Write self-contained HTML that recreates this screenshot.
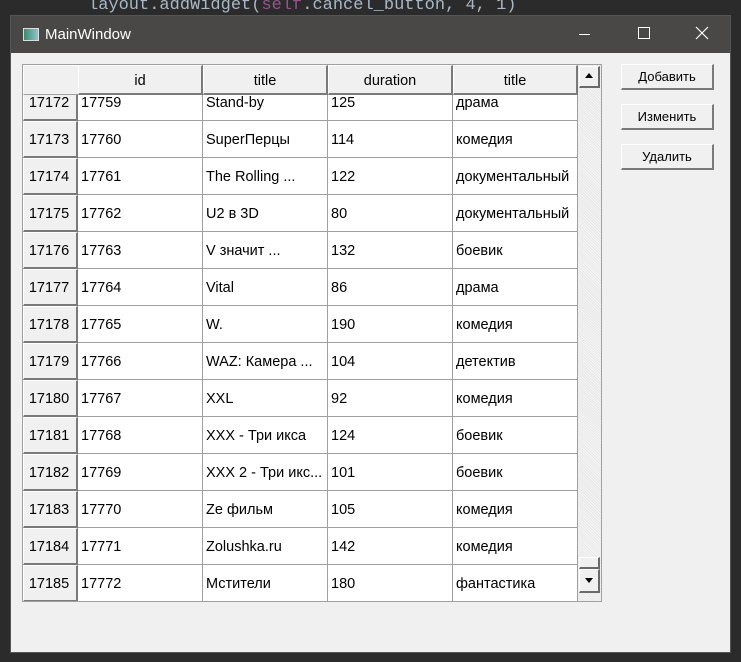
<!DOCTYPE html>
<html><head><meta charset="utf-8"><style>
*{margin:0;padding:0;box-sizing:border-box}
body{width:741px;height:662px;background:#2b2b2b;position:relative;overflow:hidden;font-family:"Liberation Sans","DejaVu Sans",sans-serif;font-size:14.5px;color:#000}
.code{position:absolute;left:88px;top:-4px;font-family:"Liberation Mono",monospace;font-size:17px;color:#a9b7c6;white-space:pre}
.win{position:absolute;left:10px;top:15px;width:721px;height:638px;background:#f0f0f0;border:1px solid #555}
.tb{position:absolute;left:0;top:0;width:100%;height:37px;background:#4a4846;color:#fff;font-size:15px}
.tb .t{position:absolute;left:34px;top:10px}
.tb .ic{position:absolute;left:12px;top:12px;width:16px;height:13px;background:linear-gradient(90deg,#3c8a6a,#8ec4d0);border:1px solid #ddd}
.a{position:absolute}
.tbl{position:absolute;left:11px;top:48px;width:580px;height:538px;background:#fff;border:1px solid #a0a0a0}
.hd{position:absolute;top:0;height:30px;background:#f0f0f0;border-top:1px solid #fff;border-left:1px solid #fff;border-right:2px solid #7a7a7a;border-bottom:2px solid #7a7a7a;text-align:center;line-height:30px}
.body{position:absolute;left:0;top:30px;width:555px;height:506px;overflow:hidden}
.row{position:absolute;left:0;height:37px;width:555px}
.vh{position:absolute;left:0;top:0;width:55px;height:37px;background:#f0f0f0;border-top:1px solid #fff;border-left:1px solid #fff;border-right:2px solid #7a7a7a;border-bottom:2px solid #7a7a7a;text-align:center;line-height:37px;padding-right:2px}
.c{position:absolute;top:0;height:37px;border-right:1px solid #a0a0a0;border-bottom:1px solid #a0a0a0;padding-left:3px;line-height:38px;white-space:nowrap;overflow:hidden}
.sb{position:absolute;left:555px;top:0;width:23px;height:536px;background:repeating-linear-gradient(45deg,#e8e8e8 0 1px,#f4f4f4 1px 2px)}
.sbb{position:absolute;left:1px;width:21px;height:22px;background:#f0f0f0;border-top:1px solid #fff;border-left:1px solid #fff;border-right:2px solid #6a6a6a;border-bottom:2px solid #6a6a6a}
.btn{position:absolute;left:610px;width:93px;height:26px;background:#f0f0f0;border-top:1px solid #fff;border-left:1px solid #fff;border-right:2px solid #7a7a7a;border-bottom:2px solid #7a7a7a;text-align:center;line-height:23px;font-size:13px}
</style></head><body>
<div class="code">layout.addWidget(<span style="color:#94558d">self</span>.cancel_button, 4, 1)</div>
<div class="win">
 <div class="tb"><div class="ic"></div><div class="t">MainWindow</div>
  <div class="a" style="left:568px;top:18px;width:11px;height:1px;background:#fff"></div>
  <div class="a" style="left:627px;top:11px;width:12px;height:12px;border:1px solid #fff"></div>
  <svg class="a" style="left:684px;top:10px" width="14" height="14"><path d="M1 1L13 13M13 1L1 13" stroke="#fff" stroke-width="1.2"/></svg>
 </div>
 <div class="tbl">
  <div class="hd" style="left:0;width:56px;border-right:1px solid #a0a0a0;border-bottom:1px solid #a0a0a0;background:#f0f0f0"></div>
  <div class="hd" style="left:55px;width:125px">id</div>
  <div class="hd" style="left:180px;width:125px">title</div>
  <div class="hd" style="left:305px;width:125px">duration</div>
  <div class="hd" style="left:430px;width:125px">title</div>
  <div class="body">
   <div class="row" style="top:-11px"><div class="vh">17172</div><div class="c" style="left:55px;width:125px">17759</div><div class="c" style="left:180px;width:125px">Stand-by</div><div class="c" style="left:305px;width:125px">125</div><div class="c" style="left:430px;width:125px">драма</div></div>
   <div class="row" style="top:26px"><div class="vh">17173</div><div class="c" style="left:55px;width:125px">17760</div><div class="c" style="left:180px;width:125px">SuperПерцы</div><div class="c" style="left:305px;width:125px">114</div><div class="c" style="left:430px;width:125px">комедия</div></div>
   <div class="row" style="top:63px"><div class="vh">17174</div><div class="c" style="left:55px;width:125px">17761</div><div class="c" style="left:180px;width:125px">The Rolling ...</div><div class="c" style="left:305px;width:125px">122</div><div class="c" style="left:430px;width:125px">документальный</div></div>
   <div class="row" style="top:100px"><div class="vh">17175</div><div class="c" style="left:55px;width:125px">17762</div><div class="c" style="left:180px;width:125px">U2 в 3D</div><div class="c" style="left:305px;width:125px">80</div><div class="c" style="left:430px;width:125px">документальный</div></div>
   <div class="row" style="top:137px"><div class="vh">17176</div><div class="c" style="left:55px;width:125px">17763</div><div class="c" style="left:180px;width:125px">V значит ...</div><div class="c" style="left:305px;width:125px">132</div><div class="c" style="left:430px;width:125px">боевик</div></div>
   <div class="row" style="top:174px"><div class="vh">17177</div><div class="c" style="left:55px;width:125px">17764</div><div class="c" style="left:180px;width:125px">Vital</div><div class="c" style="left:305px;width:125px">86</div><div class="c" style="left:430px;width:125px">драма</div></div>
   <div class="row" style="top:211px"><div class="vh">17178</div><div class="c" style="left:55px;width:125px">17765</div><div class="c" style="left:180px;width:125px">W.</div><div class="c" style="left:305px;width:125px">190</div><div class="c" style="left:430px;width:125px">комедия</div></div>
   <div class="row" style="top:248px"><div class="vh">17179</div><div class="c" style="left:55px;width:125px">17766</div><div class="c" style="left:180px;width:125px">WAZ: Камера ...</div><div class="c" style="left:305px;width:125px">104</div><div class="c" style="left:430px;width:125px">детектив</div></div>
   <div class="row" style="top:285px"><div class="vh">17180</div><div class="c" style="left:55px;width:125px">17767</div><div class="c" style="left:180px;width:125px">XXL</div><div class="c" style="left:305px;width:125px">92</div><div class="c" style="left:430px;width:125px">комедия</div></div>
   <div class="row" style="top:322px"><div class="vh">17181</div><div class="c" style="left:55px;width:125px">17768</div><div class="c" style="left:180px;width:125px">XXX - Три икса</div><div class="c" style="left:305px;width:125px">124</div><div class="c" style="left:430px;width:125px">боевик</div></div>
   <div class="row" style="top:359px"><div class="vh">17182</div><div class="c" style="left:55px;width:125px">17769</div><div class="c" style="left:180px;width:125px">XXX 2 - Три икс...</div><div class="c" style="left:305px;width:125px">101</div><div class="c" style="left:430px;width:125px">боевик</div></div>
   <div class="row" style="top:396px"><div class="vh">17183</div><div class="c" style="left:55px;width:125px">17770</div><div class="c" style="left:180px;width:125px">Ze фильм</div><div class="c" style="left:305px;width:125px">105</div><div class="c" style="left:430px;width:125px">комедия</div></div>
   <div class="row" style="top:433px"><div class="vh">17184</div><div class="c" style="left:55px;width:125px">17771</div><div class="c" style="left:180px;width:125px">Zolushka.ru</div><div class="c" style="left:305px;width:125px">142</div><div class="c" style="left:430px;width:125px">комедия</div></div>
   <div class="row" style="top:470px"><div class="vh">17185</div><div class="c" style="left:55px;width:125px">17772</div><div class="c" style="left:180px;width:125px">Мстители</div><div class="c" style="left:305px;width:125px">180</div><div class="c" style="left:430px;width:125px">фантастика</div></div>
  </div>
  <div class="sb">
   <div class="sbb" style="top:1px"><svg width="18" height="18"><path d="M5 11L9 6L13 11Z" fill="#000"/></svg></div>
   <div class="sbb" style="top:492px;height:12px"></div>
   <div class="sbb" style="top:504px;height:24px"><svg width="18" height="18"><path d="M5 8L13 8L9 13Z" fill="#000"/></svg></div>
  </div>
 </div>
 <div class="btn" style="top:48px">Добавить</div>
 <div class="btn" style="top:88px">Изменить</div>
 <div class="btn" style="top:128px">Удалить</div>
</div>
</body></html>
